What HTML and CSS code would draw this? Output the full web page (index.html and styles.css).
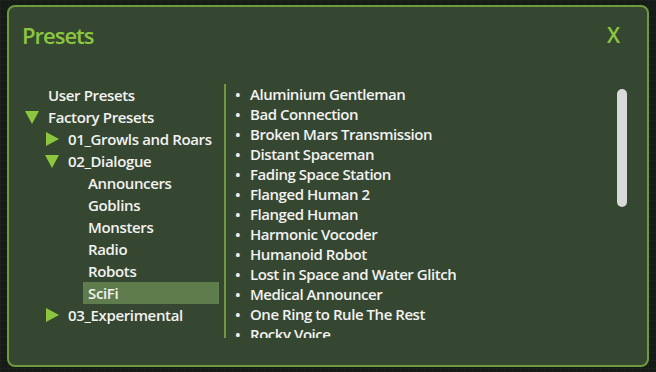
FILE: index.html
```html
<!DOCTYPE html>
<html lang="en">
<head>
  <meta charset="UTF-8">
  <title>Presets</title>
  <link rel="stylesheet" href="styles.css">
</head>
<body>

<div class="panel">
  <div class="panel-header">
    <div class="panel-title">Presets</div>
    <div class="panel-close">X</div>
  </div>

  <div class="panel-body">
    <!-- Baum links -->
    <div class="tree">
      <div class="tree-row lvl0"><span class="toggle"></span><span class="label">User Presets</span></div>
      <div class="tree-row lvl0"><span class="toggle down"></span><span class="label">Factory Presets</span></div>
      <div class="tree-row lvl1"><span class="toggle right"></span><span class="label">01_Growls and Roars</span></div>
      <div class="tree-row lvl1"><span class="toggle down"></span><span class="label">02_Dialogue</span></div>
      <div class="tree-row lvl2"><span class="toggle"></span><span class="label">Announcers</span></div>
      <div class="tree-row lvl2"><span class="toggle"></span><span class="label">Goblins</span></div>
      <div class="tree-row lvl2"><span class="toggle"></span><span class="label">Monsters</span></div>
      <div class="tree-row lvl2"><span class="toggle"></span><span class="label">Radio</span></div>
      <div class="tree-row lvl2"><span class="toggle"></span><span class="label">Robots</span></div>
      <div class="tree-row lvl2 selected"><span class="toggle"></span><span class="label">SciFi</span></div>
      <div class="tree-row lvl1"><span class="toggle right"></span><span class="label">03_Experimental</span></div>
    </div>

    <!-- Presetliste rechts -->
    <div class="preset-list">
      <ul>
        <li>Aluminium Gentleman</li>
        <li>Bad Connection</li>
        <li>Broken Mars Transmission</li>
        <li>Distant Spaceman</li>
        <li>Fading Space Station</li>
        <li>Flanged Human 2</li>
        <li>Flanged Human</li>
        <li>Harmonic Vocoder</li>
        <li>Humanoid Robot</li>
        <li>Lost in Space and Water Glitch</li>
        <li>Medical Announcer</li>
        <li>One Ring to Rule The Rest</li>
        <li>Rocky Voice</li>
      </ul>
    </div>
  </div>

  <div class="scroll-thumb"></div>
</div>

</body>
</html>
```

FILE: styles.css
```css
body {
  margin: 0;
  width: 656px;
  height: 372px;
  overflow: hidden;
  background-color: #151b16;
  background-image:
    linear-gradient(rgba(255,255,255,0.025) 1px, transparent 1px),
    linear-gradient(90deg, rgba(255,255,255,0.025) 1px, transparent 1px);
  background-size: 8px 8px;
  font-family: "Open Sans", "DejaVu Sans", sans-serif;
}

/* Dialogfenster */
.panel {
  position: relative;
  box-sizing: border-box;
  margin: 5px 0 0 7px;
  width: 642px;
  height: 362px;
  border: 2px solid #6e9a3c;
  border-radius: 8px;
  background-color: #364731;
}

.panel-header {
  display: flex;
  justify-content: space-between;
  align-items: center;
  height: 30px;
  padding: 13px 27px 0 13px;
}

.panel-title,
.panel-close {
  color: #8cc63f;
  font-size: 22px;
  font-weight: 600;
  line-height: 30px;
}

.panel-title {
  letter-spacing: -1px;
}

.panel-close {
  font-size: 21px;
}

.panel-body {
  display: flex;
  margin-top: 34px;
}

/* Baumstruktur */
.tree {
  width: 194px;
  padding-left: 16px;
}

.tree-row {
  display: flex;
  align-items: center;
  height: 22px;
  color: #f2f2f2;
  font-size: 15px;
  font-weight: 600;
  letter-spacing: -0.35px;
}

.lvl1 { padding-left: 20px; }
.lvl2 { padding-left: 40px; }

.toggle {
  flex: 0 0 23px;
  height: 14px;
  position: relative;
}

.toggle.down::before {
  content: "";
  position: absolute;
  left: 0;
  top: 1px;
  border-left: 7px solid transparent;
  border-right: 7px solid transparent;
  border-top: 13px solid #8cc63f;
}

.toggle.right::before {
  content: "";
  position: absolute;
  left: 1px;
  top: 0;
  border-top: 7px solid transparent;
  border-bottom: 7px solid transparent;
  border-left: 13px solid #8cc63f;
}

.label {
  flex: 1;
  white-space: nowrap;
  line-height: 22px;
}

.selected .label {
  margin-left: -5px;
  padding-left: 5px;
  background-color: #5f7c4c;
}

/* Liste mit Trennlinie */
.preset-list {
  height: 254px;
  margin-left: 5px;
  border-left: 2px solid #6e9a3c;
  overflow: hidden;
}

.preset-list ul {
  margin: 0;
  padding: 0 0 0 9px;
  list-style: none;
}

.preset-list li {
  height: 20px;
  line-height: 20px;
  color: #f2f2f2;
  font-size: 15px;
  font-weight: 600;
  letter-spacing: -0.45px;
  white-space: nowrap;
}

.preset-list li::before {
  content: "\2022";
  display: inline-block;
  width: 15px;
  letter-spacing: 0;
}

.scroll-thumb {
  position: absolute;
  left: 608px;
  top: 82px;
  width: 10px;
  height: 118px;
  border-radius: 5px;
  background-color: #d9d9d9;
}
```
